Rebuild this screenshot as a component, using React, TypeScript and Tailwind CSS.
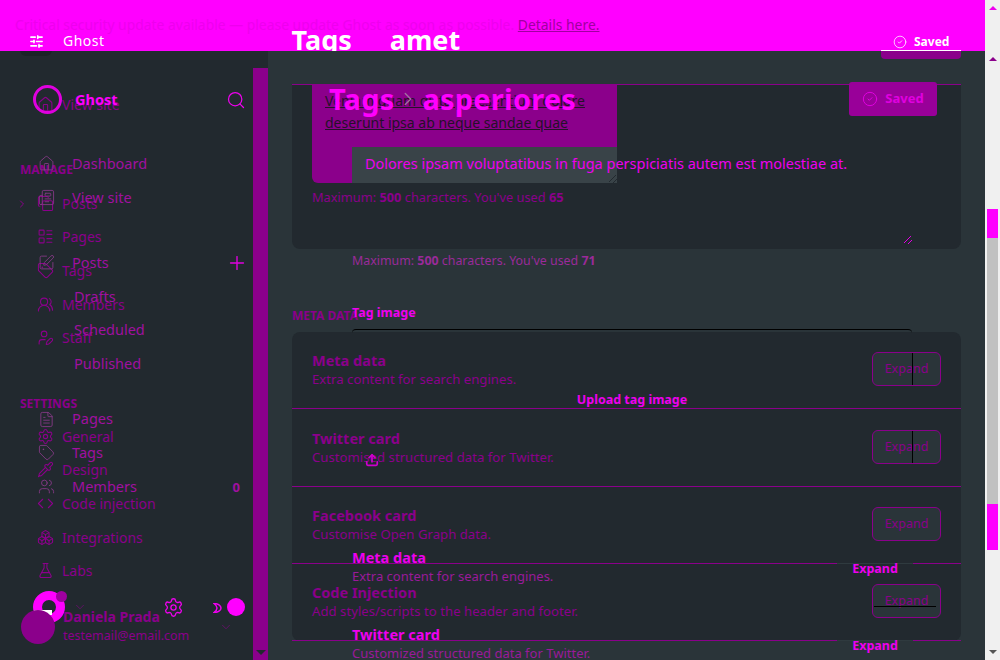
import {
  Boxes,
  ChevronDown,
  ChevronRight,
  CircleCheck,
  Code,
  Copy,
  FileText,
  FlaskConical,
  Home,
  LayoutList,
  Newspaper,
  Pipette,
  Plus,
  Search,
  Settings,
  SlidersHorizontal,
  SquarePen,
  Tag,
  Upload,
  UserPen,
  Users,
  UsersRound,
} from 'lucide-react';

const backNavTop = [
  { label: 'Posts', icon: Copy },
  { label: 'Pages', icon: LayoutList },
  { label: 'Tags', icon: Tag },
  { label: 'Members', icon: UsersRound },
  { label: 'Staff', icon: UserPen },
];

const backNavSettings = [
  { label: 'General', icon: Settings },
  { label: 'Design', icon: Pipette },
  { label: 'Code injection', icon: Code },
];

const backCards = [
  { title: 'Meta data', desc: 'Extra content for search engines.', line: 'v', row: 'h-[77px] pt-[20px]' },
  { title: 'Twitter card', desc: 'Customised structured data for Twitter.', line: 'v', row: 'h-[78px] pt-[21px]' },
  { title: 'Facebook card', desc: 'Customise Open Graph data.', line: '', row: 'h-[77px] pt-[20px]' },
  { title: 'Code Injection', desc: 'Add styles/scripts to the header and footer.', line: 'h', row: 'h-[77px] pt-[20px]' },
];

function BackRow({ label, icon: Icon }: { label: string; icon: typeof Home }) {
  return (
    <div className="flex h-[33.6px] items-center gap-[8px] pl-[17px] text-[14px] text-[#8b008b]">
      <Icon size={17} strokeWidth={1.5} />
      <span>{label}</span>
    </div>
  );
}

function FrontRow({ label, icon: Icon, extra }: { label: string; icon?: typeof Home; extra?: React.ReactNode }) {
  return (
    <div className="flex h-[33.6px] items-center pl-[38px] pr-[5px] text-[14.5px] text-[#a010a0]">
      {Icon ? <Icon size={17} strokeWidth={1.2} className="shrink-0 text-[#8a3a8a]" /> : <span className="w-[19px] shrink-0" />}
      <span className="ml-[17px]">{label}</span>
      {extra && <span className="ml-auto">{extra}</span>}
    </div>
  );
}

function BackLayer() {
  return (
    <div className="flex h-full">
      <aside className="w-[253px] shrink-0 bg-[#22292f] pl-[20px]">
        <div className="h-[56px] w-[32px] rounded-b-md bg-[#1b2227]" />
        <div className="mt-[32px]">
          <BackRow label="View site" icon={Home} />
        </div>
        <p className="mt-[41px] text-[12px] font-bold uppercase leading-[14px] text-[#8b008b]">Manage</p>
        <div className="relative mt-[10px]">
          <ChevronRight size={12} className="absolute -left-[4px] top-[11px] text-[#8b008b]" />
          {backNavTop.map(item => (
            <BackRow key={item.label} {...item} />
          ))}
        </div>
        <p className="mt-[42px] text-[12px] font-bold uppercase leading-[14px] text-[#8b008b]">Settings</p>
        <div className="mt-[9px]">
          {backNavSettings.map(item => (
            <BackRow key={item.label} {...item} />
          ))}
          <BackRow label="Integrations" icon={Boxes} />
          <BackRow label="Labs" icon={FlaskConical} />
        </div>
        <p className="mt-[21px] pl-[43px] text-[14px] font-bold leading-[16px] text-[#8b008b]">Daniela Prada</p>
        <p className="mt-[3px] pl-[43px] text-[12.5px] leading-[16px] text-[#8b008b]">testemail@email.com</p>
      </aside>

      <div className="w-[15px] shrink-0 bg-[#22292f] pt-[68px]">
        <div className="flex h-full flex-col items-center justify-end bg-[#8b008b] pb-[5px]">
          <span className="h-0 w-0 border-x-[5px] border-t-[5px] border-x-transparent border-t-[#22292f]" />
        </div>
      </div>

      <main className="min-w-0 flex-1 bg-[#2a3439] px-[24px] pt-[84px]">
        <section className="h-[165px] rounded-b-lg border-t border-[#8b008b] bg-[#22292f] pl-[20px]">
          <div className="h-[98px] w-[305px] rounded-b-md bg-[#8b008b] px-[13px] pt-[5px] text-[14px] leading-[22px] text-[#26102a] underline">
            <p>Veniam quam dicta praesentium dolore</p>
            <p>deserunt ipsa ab neque sandae quae</p>
          </div>
          <p className="mt-[6px] text-[12.8px] leading-[16px] text-[#8b008b]">
            Maximum: <b>500</b> characters. You've used <b>65</b>
          </p>
        </section>

        <p className="mt-[60px] text-[12px] font-bold uppercase leading-[14px] text-[#8b008b]">Meta data</p>
        <section className="mt-[9px] rounded-lg bg-[#22292f]">
          {backCards.map(card => (
            <div key={card.title} className={`flex border-b border-[#8b008b] px-[20px] ${card.row}`}>
              <div>
                <p className="text-[14.5px] font-bold leading-[16px] text-[#8b008b]">{card.title}</p>
                <p className="mt-[3px] text-[13.2px] leading-[16px] text-[#8b008b]">{card.desc}</p>
              </div>
              <div className="relative ml-auto flex h-[34px] w-[69px] items-center justify-center rounded-md border border-[#8b008b] bg-[#2a3439] text-[12.5px] text-[#8b008b]">
                Expand
                {card.line === 'v' && <span className="absolute left-[39px] top-0 h-full w-px bg-black" />}
                {card.line === 'h' && <span className="absolute left-[1px] top-[21px] h-px w-[62px] bg-black" />}
              </div>
            </div>
          ))}
        </section>
      </main>
    </div>
  );
}

function FrontCardRow({ title, desc }: { title: string; desc: string }) {
  return (
    <div className="flex h-[77px] w-[561px]">
      <div>
        <p className="text-[14.5px] font-bold leading-[16px] text-[#ee00ee]">{title}</p>
        <p className="mt-[3px] text-[13px] leading-[16px] text-[#9a1a9a]">{desc}</p>
      </div>
      <div className="ml-auto mt-[14px] h-[16px] w-[76px] border-t border-[#2f3a3f] text-center text-[12.5px] font-bold leading-[10px] text-[#ee00ee]">
        Expand
      </div>
    </div>
  );
}

function FrontLayer() {
  return (
    <div className="absolute inset-0 flex flex-col">
      <header className="relative h-[51px] shrink-0 overflow-hidden bg-[#ff00ff]">
        <p className="pl-[15px] pt-[16px] text-[13.9px] leading-[18px] text-[#ee00ee]">
          Critical security update available — please update Ghost as soon as possible.{' '}
          <span className="text-[#a000a0] underline">Details here.</span>
        </p>
        <div className="flex items-start text-white">
          <SlidersHorizontal size={15} strokeWidth={2.5} className="ml-[29px]" />
          <span className="ml-[19px] text-[14px] leading-[14px] tracking-[0.5px]">Ghost</span>
          <span className="ml-[187px] text-[27px] font-bold leading-[12px]">Tags</span>
          <span className="ml-[38px] text-[27px] font-bold leading-[12px]">amet</span>
        </div>
      </header>

      <div className="absolute left-[881px] top-[50px] h-[9px] w-[80px] rounded-b-sm border-t border-white bg-[#8b008b]" />
      <div className="absolute left-[893px] top-[33px] flex items-center gap-[7px] text-[12px] font-bold text-white">
        <CircleCheck size={14} strokeWidth={1.3} />
        Saved
      </div>

      <div className="flex min-h-0 flex-1">
        <aside className="w-[253px] shrink-0">
          <div className="mt-[34px] flex h-[29px] items-center pl-[33px] pr-[7px]">
            <span className="h-[29px] w-[29px] rounded-full border-[3px] border-[#e000e0]" />
            <span className="ml-[13px] text-[14.5px] font-bold text-[#ff00ff]">Ghost</span>
            <Search size={20} strokeWidth={1.5} className="ml-auto text-[#ee00ee]" />
          </div>
          <div className="mt-[33px]">
            <FrontRow label="Dashboard" icon={Home} />
            <FrontRow label="View site" icon={Newspaper} />
          </div>
          <div className="mt-[32px]">
            <FrontRow label="Posts" icon={SquarePen} extra={<Plus size={22} strokeWidth={1.5} className="text-[#e000e0]" />} />
            <FrontRow label="Drafts" />
            <FrontRow label="Scheduled" />
            <FrontRow label="Published" />
          </div>
          <div className="mt-[22px]">
            <FrontRow label="Pages" icon={FileText} />
            <FrontRow label="Tags" icon={Tag} />
            <FrontRow label="Members" icon={Users} extra={<span className="pr-[8px] text-[13px] font-bold">0</span>} />
          </div>

          <div className="mt-[88px] flex items-start pl-[33px]">
            <div className="relative h-[32px] w-[32px] rounded-full border-[9px] border-[#ff00ff]">
              <span className="absolute -right-[11px] -top-[9px] h-[11px] w-[11px] rounded-full bg-[#a000a0]" />
              <span className="absolute -left-[8px] top-[10px] h-[5px] w-[18px] bg-white" />
              <span className="absolute -left-[21px] top-[10px] h-[34px] w-[34px] rounded-full bg-[#8b008b]" />
            </div>
            <ChevronDown size={14} strokeWidth={1} className="ml-[8px] mt-[9px] text-[#8b008b]" />
            <Settings size={21} strokeWidth={1.5} className="ml-[76px] mt-[6px] text-[#ee00ee]" />
            <svg viewBox="0 0 9 10" className="ml-[29px] mt-[12px] h-[10px] w-[9px] text-[#ee00ee]">
              <path d="M1 .5C5 .5 8 2.500 8 5S5 9.500 1 9.500C3 8 4 6.500 4 5S3 2 1 .5Z" fill="none" stroke="currentColor" strokeWidth="1.5" />
            </svg>
            <div className="ml-[5px] mt-[7px] flex flex-col items-center">
              <span className="h-[18px] w-[18px] rounded-full bg-[#ff00ff]" />
              <ChevronDown size={14} strokeWidth={1} className="mt-[4px] -translate-x-[10px] text-[#8b008b]" />
            </div>
          </div>
        </aside>

        <div className="w-[15px] shrink-0" />

        <main className="min-w-0 flex-1 pl-[84px] pr-[48px]">
          <div className="-ml-[23px] mt-[31px] flex h-[34px] items-center">
            <span className="text-[29px] font-bold tracking-[0.2px] text-[#ff00ff]">Tags</span>
            <ChevronRight size={22} strokeWidth={1.5} className="ml-[3px] mr-[4px] text-[#a070a0]" />
            <span className="-ml-px text-[29px] font-bold tracking-[0.2px] text-[#ff00ff]">asperiores</span>
            <div className="ml-auto flex h-[34px] w-[88px] items-center justify-center gap-[7px] rounded-[3px] bg-[#990099] text-[13px] font-bold text-[#e000e0]">
              <CircleCheck size={16} strokeWidth={1.5} />
              Saved
            </div>
          </div>

          <div className="relative mt-[31px] h-[97px] w-[560px]">
            <div className="h-[36px] w-[265px] bg-[#394348] pl-[13px] pt-[7px]">
              <p className="whitespace-nowrap text-[14.5px] leading-[18px] text-[#ee00ee]">
                Dolores ipsam voluptatibus in fuga perspiciatis autem est molestiae at.
              </p>
            </div>
            <svg viewBox="0 0 8 8" className="absolute bottom-0 right-0 h-[8px] w-[8px] text-[#e000e0]">
              <path d="M0 7 7 0M4 8 8 4" stroke="currentColor" fill="none" />
            </svg>
            <svg viewBox="0 0 8 8" className="absolute right-[295px] top-[28px] h-[8px] w-[8px] text-[#22292f]">
              <path d="M0 7 7 0M4 8 8 4" stroke="currentColor" fill="none" />
            </svg>
          </div>
          <p className="mt-[9px] text-[12.4px] leading-[16px] text-[#9a2a9a]">
            Maximum: <b>500</b> characters. You've used <b>71</b>
          </p>

          <p className="mt-[36px] text-[12.5px] font-bold leading-[16px] text-[#ee00ee]">Tag image</p>
          <div className="mt-[8px] h-[220px] w-[560px] rounded-t-sm border-t border-black">
            <p className="pt-[62px] text-center text-[12.5px] font-bold leading-[16px] text-[#ee00ee]">Upload tag image</p>
            <Upload size={14} strokeWidth={3} className="ml-[13px] mt-[45px] text-[#cc00cc]" />
          </div>

          <FrontCardRow title="Meta data" desc="Extra content for search engines." />
          <FrontCardRow title="Twitter card" desc="Customized structured data for Twitter." />
        </main>
      </div>
    </div>
  );
}

export default function App() {
  return (
    <div className="flex h-[660px] w-[1000px] overflow-hidden font-['Noto_Sans',sans-serif]">
      <div className="relative h-full w-[985px] shrink-0">
        <BackLayer />
        <FrontLayer />
      </div>
      <div className="flex h-full w-[15px] flex-col items-center bg-[#f0f0f0] pt-[6px]">
        <span className="h-0 w-0 border-x-[4px] border-b-[4px] border-x-transparent border-b-[#ee00ee]" />
        <span className="mt-[47px] h-0 w-0 border-x-[4px] border-b-[4px] border-x-transparent border-b-[#8b008b]" />
        <div className="mt-[148px] h-[29px] w-[11px] bg-[#ff00ff]" />
        <div className="h-[266px] w-[11px] bg-[#c1c1c1]" />
        <div className="h-[46px] w-[11px] bg-[#ff00ff]" />
        <span className="mb-[6px] mt-auto h-0 w-0 border-x-[4px] border-t-[4px] border-x-transparent border-t-[#555555]" />
      </div>
    </div>
  );
}
